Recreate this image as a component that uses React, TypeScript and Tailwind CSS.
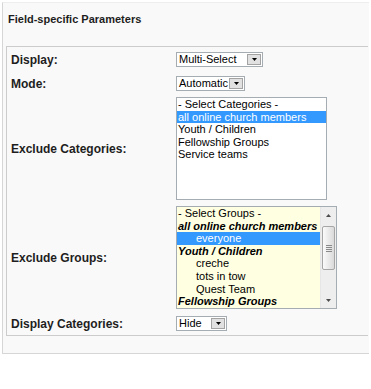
import React from 'react'

const font = { fontFamily: '"Liberation Sans", Arial, sans-serif' }

function Caret({ color = '#000' }: { color?: string }) {
  return (
    <svg width="5" height="3" viewBox="0 0 5 3">
      <path d="M0 0h5L2.5 3z" fill={color} />
    </svg>
  )
}

function Dropdown({ value, width }: { value: string; width: string }) {
  return (
    <div className={`flex h-[15px] items-center border border-[#a5acb2] bg-white ${width}`}>
      <span className="flex-1 pl-[2px] text-[11px] leading-[13px] text-black whitespace-nowrap">{value}</span>
      <span className="mr-[1px] flex h-[11px] w-[14px] items-center justify-center border border-[#a3a3a3] bg-[#e1e1e1]">
        <Caret />
      </span>
    </div>
  )
}

type Opt = { text: string; selected?: boolean; group?: boolean; indent?: boolean }

const categories: Opt[] = [
  { text: '- Select Categories -' },
  { text: 'all online church members', selected: true },
  { text: 'Youth / Children' },
  { text: 'Fellowship Groups' },
  { text: 'Service teams' },
]

const groups: Opt[] = [
  { text: '- Select Groups -' },
  { text: 'all online church members', group: true },
  { text: 'everyone', indent: true, selected: true },
  { text: 'Youth / Children', group: true },
  { text: 'creche', indent: true },
  { text: 'tots in tow', indent: true },
  { text: 'Quest Team', indent: true },
  { text: 'Fellowship Groups', group: true },
]

function OptionRow({ o }: { o: Opt }) {
  return (
    <div
      className={`h-[12.6px] text-[11px] leading-[12.6px] whitespace-nowrap ${o.indent ? 'pl-[19px]' : 'pl-[1px]'} ${
        o.selected ? 'bg-[#3399ff] text-white' : 'text-black'
      } ${o.group ? 'font-bold italic' : ''}`}
    >
      {o.text}
    </div>
  )
}

function Scrollbar() {
  return (
    <div className="flex w-[16px] flex-col border-l border-[#e6e6e6] bg-[#eeeeee]">
      <div className="flex h-[17px] items-center justify-center">
        <svg width="5" height="3" viewBox="0 0 5 3">
          <path d="M0 3h5L2.5 0z" fill="#4d4d4d" />
        </svg>
      </div>
      <div className="mx-[1px] mt-[2px] flex h-[44px] flex-col items-center justify-center gap-[1px] rounded-[2px] border border-[#a6a6a6] bg-gradient-to-r from-[#fbfbfb] to-[#dadada]">
        <div className="h-[1px] w-[6px] bg-[#8a8a8a]" />
        <div className="h-[1px] w-[6px] bg-[#8a8a8a]" />
        <div className="h-[1px] w-[6px] bg-[#8a8a8a]" />
        <div className="h-[1px] w-[6px] bg-[#8a8a8a]" />
      </div>
      <div className="flex-1" />
      <div className="flex h-[16px] items-center justify-center">
        <Caret color="#4d4d4d" />
      </div>
    </div>
  )
}

function Row({ label, mt, children }: { label: string; mt: string; children: React.ReactNode }) {
  return (
    <div className={`flex items-center ${mt}`}>
      <div className="w-[169px] pl-[4px] text-[12px] font-bold leading-[14px] text-[#1e1e1e]">{label}</div>
      {children}
    </div>
  )
}

export default function App() {
  return (
    <div className="h-[389px] w-[371px] overflow-hidden bg-white" style={font}>
      <div className="ml-[2px] mt-[2px] h-[352px] w-[367px] border-t border-l border-b border-[#d6d6d6] border-t-[#eeeeee] bg-[#f9f9f9] pt-[10px]">
        <div className="h-[33px] pl-[5px] text-[11px] font-bold leading-[13px] text-[#1e1e1e]">
          Field-specific Parameters
        </div>
        <div className="ml-[3px] h-[290px] w-[362px] border-t border-l border-b border-[#cccccc]">
          <Row label="Display:" mt="mt-[5px]">
            <Dropdown value="Multi-Select" width="w-[87px]" />
          </Row>
          <Row label="Mode:" mt="mt-[9px]">
            <Dropdown value="Automatic" width="w-[69px]" />
          </Row>
          <Row label="Exclude Categories:" mt="mt-[6px]">
            <div className="h-[103px] w-[151px] overflow-hidden border border-[#a5acb2] bg-white">
              {categories.map((o, i) => (
                <OptionRow key={i} o={o} />
              ))}
            </div>
          </Row>
          <Row label="Exclude Groups:" mt="mt-[6px]">
            <div className="flex h-[103px] w-[161px] border border-[#a5acb2] bg-[#ffffe1]">
              <div className="flex-1 overflow-hidden">
                {groups.map((o, i) => (
                  <OptionRow key={i} o={o} />
                ))}
              </div>
              <Scrollbar />
            </div>
          </Row>
          <Row label="Display Categories:" mt="mt-[7px]">
            <Dropdown value="Hide" width="w-[51px]" />
          </Row>
        </div>
      </div>
    </div>
  )
}
